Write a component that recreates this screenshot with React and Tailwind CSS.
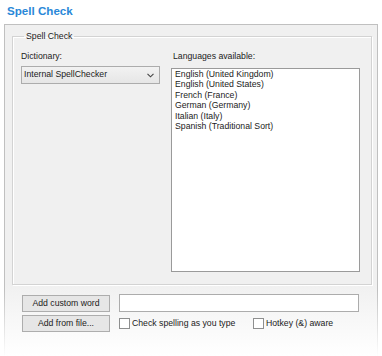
import React from "react";

const langs = [
  "English (United Kingdom)",
  "English (United States)",
  "French (France)",
  "German (Germany)",
  "Italian (Italy)",
  "Spanish (Traditional Sort)",
];

function Checkbox({ label }) {
  return (
    <label className="flex items-center gap-[2px]">
      <span className="w-[11px] h-[11px] border border-[#8e8f8f] bg-white shrink-0" />
      <span>{label}</span>
    </label>
  );
}

export default function App() {
  return (
    <div
      className="w-[382px] h-[356px] bg-white overflow-hidden text-[8.7px] text-[#1b1b1b]"
      style={{ fontFamily: '"Liberation Sans", Arial, sans-serif' }}
    >
      <div className="h-[24px] pl-[7px] pt-[4px] text-[11.6px] leading-[14px] font-bold text-[#2a88d8]">
        Spell Check
      </div>
      <div className="ml-[4px] w-[374px] h-[332px] border-l border-t border-r [border-image:linear-gradient(to_bottom,#c0c0c0_80%,#ffffff_100%)_1] bg-[linear-gradient(to_bottom,#f0f0f0_78%,#ffffff_100%)] pl-[7px] pr-[5px] pt-[6px]">
        <fieldset className="w-[360px] border border-[#d3d3d3] shadow-[inset_1px_1px_0_#ffffff,1px_1px_0_#ffffff] pl-[8px] pr-[11px] pt-[10px] pb-[12px]">
          <legend className="ml-[3px] px-[2px] leading-[10px]">Spell Check</legend>
          <div className="flex gap-[11px]">
            <div className="w-[139px] flex flex-col">
              <div className="leading-[11px]">Dictionary:</div>
              <div className="mt-[4px] h-[18px] border border-[#acacac] bg-[linear-gradient(to_bottom,#f2f2f2,#e6e6e6)] flex items-center justify-between pl-[2px] pr-[5px]">
                <span>Internal SpellChecker</span>
                <svg width="7" height="5" viewBox="0 0 7 5" className="shrink-0">
                  <polyline points="0.5,0.8 3.5,3.8 6.5,0.8" fill="none" stroke="#444" strokeWidth="1.1" />
                </svg>
              </div>
            </div>
            <div className="w-[189px] flex flex-col">
              <div className="leading-[11px] pl-[2px]">Languages available:</div>
              <div className="mt-[6px] h-[204px] border border-[#9a9a9a] bg-white pl-[3px] leading-[10.4px]">
                {langs.map((l) => (
                  <div key={l}>{l}</div>
                ))}
              </div>
            </div>
          </div>
        </fieldset>
        <div className="pl-[10px] pt-[9px] flex flex-col gap-[3px]">
          <div className="flex items-center gap-[9px]">
            <button className="w-[88px] h-[17px] border border-[#adadad] bg-[#e6e6e6] text-center leading-[15px]">
              Add custom word
            </button>
            <div className="w-[240px] h-[18px] border border-[#acacac] bg-white" />
          </div>
          <div className="flex items-center gap-[9px]">
            <button className="w-[88px] h-[17px] border border-[#adadad] bg-[#e6e6e6] text-center leading-[15px]">
              Add from file...
            </button>
            <div className="w-[125px] pt-[1px]">
              <Checkbox label="Check spelling as you type" />
            </div>
            <div className="pt-[1px]">
              <Checkbox label="Hotkey (&) aware" />
            </div>
          </div>
        </div>
      </div>
    </div>
  );
}
